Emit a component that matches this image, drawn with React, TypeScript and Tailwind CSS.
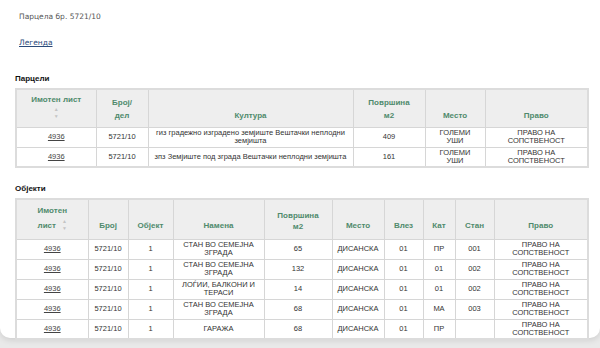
import React from 'react';

const parcels = [
  { list: '4936', broj: '5721/10', kultura: 'гиз градежно изградено земјиште Вештачки неплодни земјишта', povrsina: '409', mesto: 'ГОЛЕМИ УШИ', pravo: 'ПРАВО НА СОПСТВЕНОСТ' },
  { list: '4936', broj: '5721/10', kultura: 'зпз Земјиште под зграда Вештачки неплодни земјишта', povrsina: '161', mesto: 'ГОЛЕМИ УШИ', pravo: 'ПРАВО НА СОПСТВЕНОСТ' },
];

const objects = [
  { namena: 'СТАН ВО СЕМЕЈНА ЗГРАДА', povrsina: '65', kat: 'ПР', stan: '001' },
  { namena: 'СТАН ВО СЕМЕЈНА ЗГРАДА', povrsina: '132', kat: '01', stan: '002' },
  { namena: 'ЛОЃИИ, БАЛКОНИ И ТЕРАСИ', povrsina: '14', kat: '01', stan: '002' },
  { namena: 'СТАН ВО СЕМЕЈНА ЗГРАДА', povrsina: '68', kat: 'МА', stan: '003' },
  { namena: 'ГАРАЖА', povrsina: '68', kat: 'ПР', stan: '' },
];

const SortArrows = () => (
  <span className="inline-flex flex-col items-center leading-none text-[#c4c4c4] text-[5px]">
    <span>▲</span>
    <span className="mt-[2px]">▼</span>
  </span>
);

const th = 'border border-[#d6d6d6] bg-[#eeeeee] text-[#4f8a6c] font-bold text-[8px] leading-[13px] align-bottom pb-[5px] px-1 text-center';
const td = 'border border-[#d6d6d6] text-[7.5px] leading-[8px] text-[#333] text-center align-middle px-1 py-[1px]';

export default function App() {
  return (
    <div className="w-[600px] h-[348px] bg-[#e9e9e9] overflow-hidden" style={{ fontFamily: '"Liberation Sans", Arial, sans-serif' }}>
      <div className="bg-white h-[338px] rounded-b-[10px] shadow-[0_2px_6px_rgba(0,0,0,0.12)] px-[15px] pt-[12px]">
        <div className="pl-[4px] text-[7.5px] text-[#555] leading-[10px]" style={{ fontFamily: '"DejaVu Sans", Verdana, sans-serif' }}>
          Парцела бр. 5721/10
        </div>
        <div className="pl-[4px] mt-[6px]">
          <a className="text-[7.5px] text-[#2a4a7a] underline leading-[10px]" style={{ fontFamily: '"DejaVu Sans", Verdana, sans-serif' }}>
            Легенда
          </a>
        </div>

        <div className="mt-[22px] text-[8px] font-bold text-[#111] leading-[10px]">Парцели</div>
        <table className="mt-[4px] w-[572px] table-fixed border-collapse border-2 border-[#dcdcdc]">
          <colgroup>
            <col className="w-[80px]" />
            <col className="w-[52px]" />
            <col className="w-[205px]" />
            <col className="w-[72px]" />
            <col className="w-[60px]" />
            <col className="w-[103px]" />
          </colgroup>
          <thead>
            <tr className="h-[38px]">
              <th className={th + ' !align-top pt-[3px]'}>
                <div>Имотен лист</div>
                <div className="flex justify-center mt-[1px]"><SortArrows /></div>
              </th>
              <th className={th}>Број/<br />дел</th>
              <th className={th}>Култура</th>
              <th className={th}>Површина<br />м2</th>
              <th className={th}>Место</th>
              <th className={th}>Право</th>
            </tr>
          </thead>
          <tbody>
            {parcels.map((p, i) => (
              <tr key={i} className="h-[20px]">
                <td className={td}><span className="underline text-[#444]">{p.list}</span></td>
                <td className={td}>{p.broj}</td>
                <td className={td}>{p.kultura}</td>
                <td className={td}>{p.povrsina}</td>
                <td className={td + ' px-3'}>{p.mesto}</td>
                <td className={td + ' px-4'}>{p.pravo}</td>
              </tr>
            ))}
          </tbody>
        </table>

        <div className="mt-[16px] text-[8px] font-bold text-[#111] leading-[10px]">Објекти</div>
        <table className="mt-[4px] w-[572px] table-fixed border-collapse border-2 border-[#dcdcdc]">
          <colgroup>
            <col className="w-[72px]" />
            <col className="w-[40px]" />
            <col className="w-[45px]" />
            <col className="w-[91px]" />
            <col className="w-[68px]" />
            <col className="w-[52px]" />
            <col className="w-[39px]" />
            <col className="w-[32px]" />
            <col className="w-[39px]" />
            <col className="w-[94px]" />
          </colgroup>
          <thead>
            <tr className="h-[40px]">
              <th className={th + ' pb-[7px]'}>
                <div>Имотен</div>
                <div className="flex justify-center items-center gap-[6px] mt-[2px]">
                  <span>лист</span>
                  <SortArrows />
                </div>
              </th>
              <th className={th + ' pb-[7px]'}>Број</th>
              <th className={th + ' pb-[7px]'}>Објект</th>
              <th className={th + ' pb-[7px]'}>Намена</th>
              <th className={th + ' pb-[7px] !leading-[11px]'}>Површина<br />м2</th>
              <th className={th + ' pb-[7px]'}>Место</th>
              <th className={th + ' pb-[7px]'}>Влез</th>
              <th className={th + ' pb-[7px]'}>Кат</th>
              <th className={th + ' pb-[7px]'}>Стан</th>
              <th className={th + ' pb-[7px]'}>Право</th>
            </tr>
          </thead>
          <tbody>
            {objects.map((o, i) => (
              <tr key={i} className="h-[20px]">
                <td className={td}><span className="underline text-[#444]">4936</span></td>
                <td className={td}>5721/10</td>
                <td className={td}>1</td>
                <td className={td + ' px-2'}>{o.namena}</td>
                <td className={td}>{o.povrsina}</td>
                <td className={td}>ДИСАНСКА</td>
                <td className={td}>01</td>
                <td className={td}>{o.kat}</td>
                <td className={td}>{o.stan}</td>
                <td className={td + ' px-4'}>ПРАВО НА СОПСТВЕНОСТ</td>
              </tr>
            ))}
          </tbody>
        </table>
      </div>
    </div>
  );
}
